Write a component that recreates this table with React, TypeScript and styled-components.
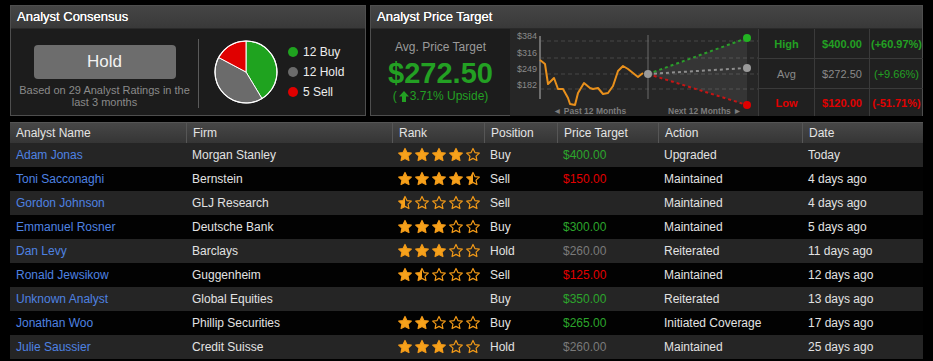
import React, { useId } from "react";
import styled, { createGlobalStyle } from "styled-components";

const GlobalStyle = createGlobalStyle`
  body {
    margin: 0;
    background: #000;
    font-family: "Liberation Sans", Arial, sans-serif;
  }
`;

const Page = styled.div`
  width: 913px;
  padding: 5px 10px 0 10px;
  display: flex;
  flex-direction: column;
  gap: 6px;
`;

const TopRow = styled.div`
  display: flex;
  gap: 4px;
  height: 111px;
`;

const Panel = styled.div<{ $width?: number }>`
  display: flex;
  flex-direction: column;
  border: 1px solid #4e4e4e;
  background: #1c1c1c;
  box-sizing: border-box;
  ${(p) => (p.$width ? `width: ${p.$width}px;` : "flex: 1;")}
`;

const PanelHeader = styled.div`
  height: 22px;
  line-height: 22px;
  padding: 0 6px;
  background: linear-gradient(#454545, #393939);
  border-bottom: 1px solid #2a2a2a;
  color: #fff;
  font-size: 13px;
  text-shadow: 0 0 0.4px #fff;
`;

const PanelBody = styled.div`
  flex: 1;
  display: flex;
  align-items: flex-start;
`;

/* consensus */
const ConsensusLeft = styled.div`
  width: 187px;
  display: flex;
  flex-direction: column;
  align-items: center;
  padding-top: 16px;
`;

const HoldButton = styled.div`
  width: 142px;
  height: 34px;
  line-height: 34px;
  border-radius: 4px;
  background: #6d6d6d;
  color: #f2f2f2;
  font-size: 17px;
  text-align: center;
  margin-bottom: 5px;
`;

const SubText = styled.div`
  color: #8a8a8a;
  font-size: 11px;
  line-height: 12px;
  text-align: center;
  width: 176px;
`;

const Divider = styled.div`
  width: 1px;
  height: 69px;
  margin-top: 10px;
  background: #5a5a5a;
`;

const PieBox = styled.div`
  margin: 11px 0 0 15px;
  width: 64px;
  height: 64px;
`;

const Legend = styled.div`
  margin: 13px 0 0 10px;
  display: flex;
  flex-direction: column;
`;

const LegendRow = styled.div`
  display: flex;
  align-items: center;
  height: 20px;
  gap: 5px;
  color: #eee;
  font-size: 12px;
`;

const Dot = styled.span<{ $color: string }>`
  width: 10px;
  height: 10px;
  border-radius: 50%;
  background: ${(p) => p.$color};
`;

/* price target */
const AvgBlock = styled.div`
  width: 139px;
  display: flex;
  flex-direction: column;
  align-items: center;
  padding-top: 11px;
`;

const AvgLabel = styled.div`
  color: #9a9a9a;
  font-size: 12px;
  line-height: 14px;
`;

const AvgPrice = styled.div`
  color: #23a023;
  font-size: 29px;
  font-weight: bold;
  line-height: 33px;
  margin-top: 3px;
`;

const Upside = styled.div`
  color: #23a023;
  font-size: 12px;
  line-height: 13px;
  display: flex;
  align-items: center;
`;

const ChartBox = styled.div`
  width: 248px;
  height: 87px;
  background: #262626;
`;

const RangeTable = styled.div`
  width: 164px;
  height: 87px;
  display: grid;
  grid-template-columns: 55px 55px 54px;
  grid-template-rows: 30px 30px 27px;
  background: #202020;
  border-left: 1px solid #3a3a3a;
  box-sizing: border-box;
`;

const RangeCell = styled.div<{ $color: string; $bold?: boolean; $last?: boolean; $first?: boolean }>`
  display: flex;
  align-items: center;
  justify-content: center;
  font-size: 11px;
  font-weight: ${(p) => (p.$bold ? "bold" : "normal")};
  color: ${(p) => p.$color};
  border-bottom: ${(p) => (p.$last ? "none" : "1px solid #3a3a3a")};
  border-left: ${(p) => (p.$first ? "none" : "1px solid #3a3a3a")};
`;

/* ratings table */
const COLS = "176px 206px 92px 73px 101px 144px 121px";

const Table = styled.div`
  display: flex;
  flex-direction: column;
`;

const HeaderRow = styled.div`
  display: grid;
  grid-template-columns: ${COLS};
  height: 20px;
  background: linear-gradient(#474747, #353535);
  border-top: 1px solid #555;
`;

const HeaderCell = styled.div<{ $first?: boolean }>`
  padding-left: 6px;
  line-height: 20px;
  font-size: 12px;
  color: #e4e4e4;
  border-left: ${(p) => (p.$first ? "none" : "1px solid #565656")};
`;

const Row = styled.div<{ $odd: boolean }>`
  display: grid;
  grid-template-columns: ${COLS};
  height: 24px;
  align-items: center;
  background: ${(p) => (p.$odd ? "#252525" : "#020202")};
`;

const Cell = styled.div<{ $color?: string }>`
  padding-left: 6px;
  font-size: 12px;
  color: ${(p) => p.$color || "#e2e2e2"};
  white-space: nowrap;
`;

const Stars = styled.div`
  padding-left: 5px;
  display: flex;
  gap: 1px;
`;

const STAR =
  "M12 2.2l2.9 6.1 6.6.8-4.9 4.6 1.3 6.6L12 17.1l-5.9 3.2 1.3-6.6-4.9-4.6 6.6-.8z";

const Star = ({ fill }: { fill: number }) => {
  const raw = useId();
  const id = "c" + raw.replace(/[^a-zA-Z0-9]/g, "");
  return (
    <svg width="16" height="16" viewBox="0 0 24 24">
      <defs>
        <clipPath id={id}>
          <rect x="0" y="0" width="12" height="24" />
        </clipPath>
      </defs>
      {fill > 0 && (
        <path
          d={STAR}
          fill="#f6a21c"
          clipPath={fill < 1 ? `url(#${id})` : undefined}
        />
      )}
      <path
        d={STAR}
        fill="none"
        stroke="#f29a18"
        strokeWidth="1.8"
        strokeLinejoin="round"
      />
    </svg>
  );
};

const Rating = ({ value }: { value: number | null }) => {
  if (value === null) return <Stars />;
  return (
    <Stars>
      {[0, 1, 2, 3, 4].map((i) => (
        <Star key={i} fill={Math.max(0, Math.min(1, value - i))} />
      ))}
    </Stars>
  );
};

const GREEN = "#2ca52c";
const RED = "#e10000";
const GRAY = "#7a7a7a";

const rows = [
  { name: "Adam Jonas", firm: "Morgan Stanley", rank: 4, pos: "Buy", price: "$400.00", pc: GREEN, action: "Upgraded", date: "Today" },
  { name: "Toni Sacconaghi", firm: "Bernstein", rank: 4.5, pos: "Sell", price: "$150.00", pc: RED, action: "Maintained", date: "4 days ago" },
  { name: "Gordon Johnson", firm: "GLJ Research", rank: 0.5, pos: "Sell", price: "", pc: GRAY, action: "Maintained", date: "4 days ago" },
  { name: "Emmanuel Rosner", firm: "Deutsche Bank", rank: 3, pos: "Buy", price: "$300.00", pc: GREEN, action: "Maintained", date: "5 days ago" },
  { name: "Dan Levy", firm: "Barclays", rank: 3, pos: "Hold", price: "$260.00", pc: GRAY, action: "Reiterated", date: "11 days ago" },
  { name: "Ronald Jewsikow", firm: "Guggenheim", rank: 1.5, pos: "Sell", price: "$125.00", pc: RED, action: "Maintained", date: "12 days ago" },
  { name: "Unknown Analyst", firm: "Global Equities", rank: null, pos: "Buy", price: "$350.00", pc: GREEN, action: "Reiterated", date: "13 days ago" },
  { name: "Jonathan Woo", firm: "Phillip Securities", rank: 2, pos: "Buy", price: "$265.00", pc: GREEN, action: "Initiated Coverage", date: "17 days ago" },
  { name: "Julie Saussier", firm: "Credit Suisse", rank: 3, pos: "Hold", price: "$260.00", pc: GRAY, action: "Maintained", date: "25 days ago" },
];

const headers = ["Analyst Name", "Firm", "Rank", "Position", "Price Target", "Action", "Date"];

const Pie = () => {
  const r = 31;
  const c = 32;
  const pt = (deg: number) => {
    const a = ((deg - 90) * Math.PI) / 180;
    return `${c + r * Math.cos(a)} ${c + r * Math.sin(a)}`;
  };
  const slice = (from: number, to: number, color: string) => (
    <path
      d={`M${c} ${c} L${pt(from)} A${r} ${r} 0 ${to - from > 180 ? 1 : 0} 1 ${pt(to)} Z`}
      fill={color}
      stroke="#fff"
      strokeWidth="1"
    />
  );
  const buy = (12 / 29) * 360;
  const hold = buy + (12 / 29) * 360;
  return (
    <svg width="64" height="64" viewBox="0 0 64 64">
      {slice(0, buy, "#1fa31f")}
      {slice(buy, hold, "#6b6b6b")}
      {slice(hold, 360, "#e00000")}
      <circle cx={c} cy={c} r={r} fill="none" stroke="#fff" strokeWidth="1.2" />
    </svg>
  );
};

const history =
  "30,31 35,35 38,55 44,49 48,60 53,60 58,69 60,75 65,76 68,64 74,54 80,59 83,60 88,59 93,65 98,64 103,57 108,42 113,37 118,40 123,44 128,48 133,44";

const Chart = () => (
  <svg width="248" height="87" viewBox="0 0 248 87">
    {[12, 29, 45, 60].map((y) => (
      <line key={y} x1="30" y1={y} x2="248" y2={y} stroke="#464646" strokeDasharray="4 3" />
    ))}
    {[
      ["$384", 10],
      ["$316", 27],
      ["$249", 43],
      ["$182", 59],
    ].map(([t, y]) => (
      <text key={t} x="27" y={y} textAnchor="end" fontSize="9" fill="#8a8a8a" fontFamily="Liberation Sans, Arial, sans-serif">
        {t}
      </text>
    ))}
    <line x1="30" y1="7" x2="30" y2="70" stroke="#6e6e6e" strokeWidth="2" />
    <line x1="138" y1="6" x2="138" y2="70" stroke="#6a6a6a" strokeWidth="1" />
    <polygon points="138,45 237,9 237,76" fill="rgba(255,255,255,0.07)" />
    <polyline points={history} fill="none" stroke="#e8901c" strokeWidth="2" strokeLinejoin="round" />
    <line x1="138" y1="45" x2="237" y2="9" stroke="#2a9d2a" strokeWidth="2" strokeDasharray="3 3" />
    <line x1="138" y1="45" x2="237" y2="39" stroke="#8e8e8e" strokeWidth="2" strokeDasharray="3 3" />
    <line x1="138" y1="45" x2="237" y2="76" stroke="#c81414" strokeWidth="2" strokeDasharray="3 3" />
    <circle cx="138" cy="45" r="4" fill="#9a9a9a" />
    <circle cx="237" cy="9" r="4" fill="#22b322" />
    <circle cx="237" cy="39" r="4" fill="#9a9a9a" />
    <circle cx="237" cy="76" r="4" fill="#e00000" />
    <text x="43" y="85" fontSize="8.5" fill="#7c7c7c" fontWeight="bold" fontFamily="Liberation Sans, Arial, sans-serif">
      ◄ Past 12 Months
    </text>
    <text x="158" y="85" fontSize="8.5" fill="#7c7c7c" fontWeight="bold" fontFamily="Liberation Sans, Arial, sans-serif">
      Next 12 Months ►
    </text>
  </svg>
);

const UpArrow = () => (
  <svg width="10" height="11" viewBox="0 0 10 11" style={{ margin: "0 1px 0 2px" }}>
    <path d="M5 0 L10 5.5 H7 V11 H3 V5.5 H0 Z" fill="#23a023" />
  </svg>
);

const ranges = [
  { label: "High", price: "$400.00", pct: "(+60.97%)", color: "#23a023", bold: true },
  { label: "Avg", price: "$272.50", pct: "(+9.66%)", color: "#8a8a8a", bold: false },
  { label: "Low", price: "$120.00", pct: "(-51.71%)", color: "#e00000", bold: true },
];

export default function App() {
  return (
    <>
      <GlobalStyle />
      <Page>
        <TopRow>
          <Panel $width={356}>
            <PanelHeader>Analyst Consensus</PanelHeader>
            <PanelBody>
              <ConsensusLeft>
                <HoldButton>Hold</HoldButton>
                <SubText>Based on 29 Analyst Ratings in the last 3 months</SubText>
              </ConsensusLeft>
              <Divider />
              <PieBox>
                <Pie />
              </PieBox>
              <Legend>
                <LegendRow>
                  <Dot $color="#1fa31f" />
                  12 Buy
                </LegendRow>
                <LegendRow>
                  <Dot $color="#6b6b6b" />
                  12 Hold
                </LegendRow>
                <LegendRow>
                  <Dot $color="#e00000" />
                  5 Sell
                </LegendRow>
              </Legend>
            </PanelBody>
          </Panel>
          <Panel>
            <PanelHeader>Analyst Price Target</PanelHeader>
            <PanelBody>
              <AvgBlock>
                <AvgLabel>Avg. Price Target</AvgLabel>
                <AvgPrice>$272.50</AvgPrice>
                <Upside>
                  (<UpArrow />
                  3.71% Upside)
                </Upside>
              </AvgBlock>
              <ChartBox>
                <Chart />
              </ChartBox>
              <RangeTable>
                {ranges.map((r, i) => (
                  <React.Fragment key={r.label}>
                    <RangeCell $first $color={r.color} $bold={r.bold} $last={i === 2}>
                      {r.label}
                    </RangeCell>
                    <RangeCell $color={r.color} $bold={r.bold} $last={i === 2}>
                      {r.price}
                    </RangeCell>
                    <RangeCell $color={i === 1 ? "#23a023" : r.color} $bold={r.bold} $last={i === 2}>
                      {r.pct}
                    </RangeCell>
                  </React.Fragment>
                ))}
              </RangeTable>
            </PanelBody>
          </Panel>
        </TopRow>
        <Table>
          <HeaderRow>
            {headers.map((h, i) => (
              <HeaderCell key={h} $first={i === 0}>
                {h}
              </HeaderCell>
            ))}
          </HeaderRow>
          {rows.map((r, i) => (
            <Row key={r.name} $odd={i % 2 === 0}>
              <Cell $color="#4e82e2">{r.name}</Cell>
              <Cell>{r.firm}</Cell>
              <Rating value={r.rank} />
              <Cell>{r.pos}</Cell>
              <Cell $color={r.pc}>{r.price}</Cell>
              <Cell>{r.action}</Cell>
              <Cell>{r.date}</Cell>
            </Row>
          ))}
        </Table>
      </Page>
    </>
  );
}
